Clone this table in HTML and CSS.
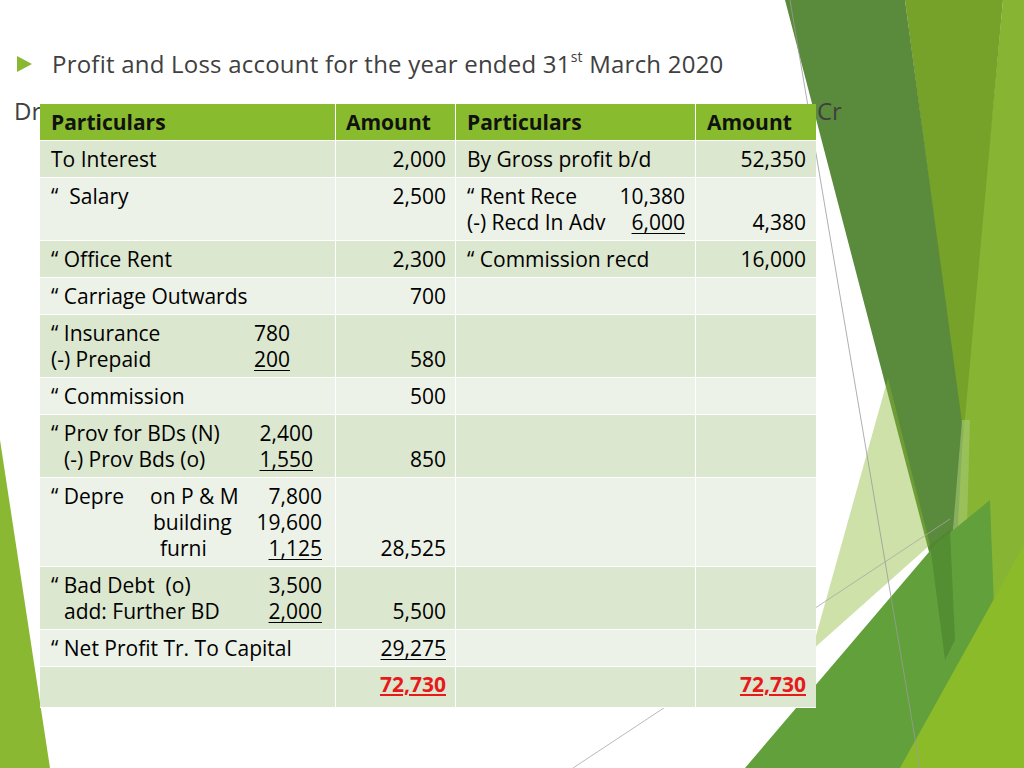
FILE: index.html
```html
<!DOCTYPE html>
<html lang="en">
<head>
<meta charset="utf-8">
<title>Profit and Loss account</title>
<link rel="stylesheet" href="styles.css">
</head>
<body>
<div class="slide">
  <svg class="deco" viewBox="0 0 1024 768" width="1024" height="768" aria-hidden="true">
    <polygon points="0,440 50,768 0,768" fill="#8ab833"/>
    <polygon points="1003,0 1024,0 1024,768 930,768" fill="#87b533"/>
    <polygon points="905,0 1003,0 963,440" fill="#76a22a"/>
    <polygon points="785,0 905,0 963,430 952,640" fill="#5a8a3b"/>
    <polygon points="962,420 970,420 962,700 938,710" fill="#a6c874" opacity="0.6"/>
    <polygon points="888,378 812,650 930,545" fill="#8ab833" opacity="0.42"/>
    <polygon points="745,768 935,545 990,500 1000,768" fill="#62a03c"/>
    <polygon points="930,545 950,530 955,640 945,660" fill="#4f862f" opacity="0.7"/>
    <polygon points="900,768 1024,545 1024,768" fill="#8cbb2a"/>
    <line x1="790" y1="0" x2="920" y2="768" stroke="#9a9a9a" stroke-width="0.8"/>
    <line x1="573" y1="768" x2="950" y2="519" stroke="#a8a8a8" stroke-width="0.8"/>
  </svg>

  <div class="content">
    <h1 class="title"><span class="bullet"></span><span>Profit and Loss account for the year ended 31<sup>st</sup> March 2020</span></h1>

    <div class="account">
      <span class="side dr">Dr</span>
      <table class="ledger">
        <colgroup>
          <col class="c-part1"><col class="c-amt1"><col class="c-part2"><col class="c-amt2">
        </colgroup>
        <thead>
          <tr><th>Particulars</th><th>Amount</th><th>Particulars</th><th>Amount</th></tr>
        </thead>
        <tbody>
          <tr class="dark">
            <td>To Interest</td><td class="num">2,000</td>
            <td>By Gross profit b/d</td><td class="num">52,350</td>
          </tr>
          <tr class="light">
            <td>“&nbsp;&nbsp;Salary<br>&nbsp;</td><td class="num top">2,500</td>
            <td>
              <div class="sub sub-rent">
                <span>“ Rent Rece</span><span class="v">10,380</span>
                <span>(-) Recd In Adv</span><span class="v"><u>6,000</u></span>
              </div>
            </td>
            <td class="num bottom">4,380</td>
          </tr>
          <tr class="dark">
            <td>“ Office Rent</td><td class="num">2,300</td>
            <td>“ Commission recd</td><td class="num">16,000</td>
          </tr>
          <tr class="light">
            <td>“ Carriage Outwards</td><td class="num">700</td>
            <td></td><td></td>
          </tr>
          <tr class="dark">
            <td>
              <div class="sub sub-ins">
                <span>“ Insurance</span><span class="v">780</span>
                <span>(-) Prepaid</span><span class="v"><u>200</u></span>
              </div>
            </td>
            <td class="num bottom">580</td><td></td><td></td>
          </tr>
          <tr class="light">
            <td>“ Commission</td><td class="num">500</td><td></td><td></td>
          </tr>
          <tr class="dark">
            <td>
              <div class="sub sub-prov">
                <span>“ Prov for BDs (N)</span><span class="v">2,400</span>
                <span class="ind">(-) Prov Bds (o)</span><span class="v"><u>1,550</u></span>
              </div>
            </td>
            <td class="num bottom">850</td><td></td><td></td>
          </tr>
          <tr class="light">
            <td>
              <div class="sub sub-dep">
                <span>“ Depre</span><span>on P &amp; M</span><span class="v">7,800</span>
                <span></span><span class="p1">building</span><span class="v">19,600</span>
                <span></span><span class="p2">furni</span><span class="v"><u>1,125</u></span>
              </div>
            </td>
            <td class="num bottom">28,525</td><td></td><td></td>
          </tr>
          <tr class="dark">
            <td>
              <div class="sub sub-bd">
                <span>“ Bad Debt&nbsp;&nbsp;(o)</span><span class="v">3,500</span>
                <span class="ind">add: Further BD</span><span class="v"><u>2,000</u></span>
              </div>
            </td>
            <td class="num bottom">5,500</td><td></td><td></td>
          </tr>
          <tr class="light">
            <td>“ Net Profit Tr. To Capital</td><td class="num"><u>29,275</u></td><td></td><td></td>
          </tr>
          <tr class="dark total">
            <td></td><td class="num"><span class="red">72,730</span></td>
            <td></td><td class="num"><span class="red">72,730</span></td>
          </tr>
        </tbody>
      </table>
      <span class="side cr">Cr</span>
    </div>
  </div>
</div>
</body>
</html>
```

FILE: styles.css
```css
* { box-sizing: border-box; }

html, body {
  margin: 0;
  padding: 0;
  background: #ffffff;
}

body {
  font-family: "Open Sans", "Lato", "DejaVu Sans", sans-serif;
  font-variant-ligatures: none;
  color: #000;
}

.slide {
  position: relative;
  width: 1024px;
  height: 768px;
  overflow: hidden;
  background: #fff;
}

.deco {
  position: absolute;
  left: 0;
  top: 0;
}

.content {
  position: relative;
  padding-top: 48px;
}

.title {
  display: flex;
  align-items: center;
  margin: 0;
  padding-left: 17px;
  font-weight: normal;
  font-size: 24px;
  line-height: 32px;
  letter-spacing: 0.22px;
  color: #404040;
}

.title sup {
  font-size: 14px;
  line-height: 0;
  position: relative;
  top: -2px;
}

.bullet {
  flex: none;
  width: 0;
  height: 0;
  border-top: 8px solid transparent;
  border-bottom: 8px solid transparent;
  border-left: 15px solid #8ab833;
  margin-right: 20px;
}

.account {
  display: flex;
  align-items: flex-start;
  margin-top: 24px;
}

.side {
  font-size: 24px;
  line-height: 28px;
  color: #404040;
  margin-top: -7px;
}

.dr {
  width: 40px;
  padding-left: 14px;
}

.cr {
  padding-left: 1px;
}

.ledger {
  border-collapse: separate;
  border-spacing: 0;
  width: 776px;
  table-layout: fixed;
  font-size: 21px;
  line-height: 26px;
}

.c-part1 { width: 296px; }
.c-amt1 { width: 120px; }
.c-part2 { width: 240px; }
.c-amt2 { width: 120px; }

.ledger th,
.ledger td {
  padding: 5px 9px 5px 11px;
  border-right: 1px solid #fff;
  border-bottom: 1px solid #fff;
  vertical-align: middle;
  text-align: left;
  white-space: nowrap;
}

.ledger th:last-child,
.ledger td:last-child {
  border-right: none;
  padding-right: 10px;
}

.ledger th {
  background: #88bb2d;
  font-weight: bold;
  color: #111;
  padding-left: 11px;
  padding-top: 5px;
  padding-bottom: 5px;
}

.ledger th:nth-child(2) { padding-left: 10px; }

.ledger .dark td { background: #dce7cf; }
.ledger .light td { background: #edf2e8; }

.ledger td.num { text-align: right; }
.ledger td.top { vertical-align: top; }
.ledger td.bottom { vertical-align: bottom; }

.ledger .total td {
  height: 41px;
  padding-top: 2px;
  padding-bottom: 9px;
}

.red {
  color: #e8191b;
  font-weight: bold;
  text-decoration: underline;
}

u { text-decoration-thickness: 1px; text-underline-offset: 3px; }

.sub {
  display: grid;
  grid-template-columns: 1fr auto;
}

.sub .v { text-align: right; }
.sub .ind { padding-left: 13px; }

.sub-ins { width: 239px; }
.sub-prov { width: 262px; }
.sub-bd { width: 271px; }
.sub-rent { width: 218px; }

.sub-dep {
  width: 271px;
  grid-template-columns: 99px 1fr auto;
}
.sub-dep .p1 { padding-left: 3px; }
.sub-dep .p2 { padding-left: 10px; }
```
